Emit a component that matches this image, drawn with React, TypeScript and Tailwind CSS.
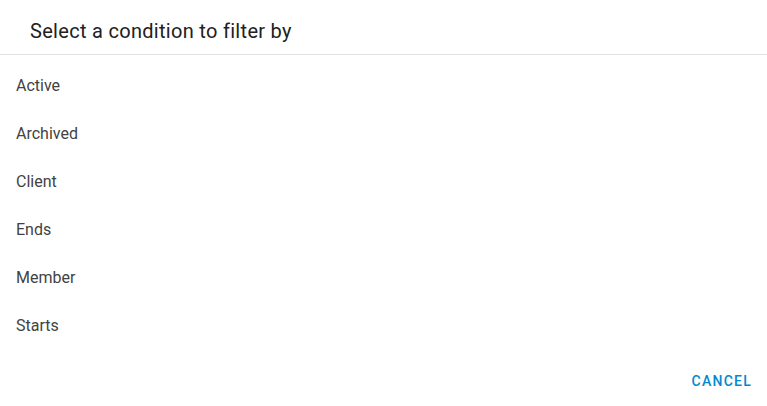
const conditions = ["Active", "Archived", "Client", "Ends", "Member", "Starts"];

export default function App() {
    return (
        <div className="w-[767px] h-[406px] bg-white flex flex-col font-['Roboto',sans-serif]">
            <div className="h-[55px] border-b border-[#e0e0e0] flex items-center px-[30px] pt-[8px]">
                <h2 className="text-[20px] font-normal text-[#212121] tracking-[0.3px]">Select a condition to filter by</h2>
            </div>
            <ul className="pt-[7px]">
                {conditions.map((c) => (
                    <li key={c} className="h-12 flex items-center px-4 text-[16px] text-[#424242]">
                        {c}
                    </li>
                ))}
            </ul>
            <div className="flex justify-end pr-[7px] mt-[13px]">
                <button className="h-9 px-2 text-[14px] font-medium tracking-[1.25px] text-[#0288d1]">CANCEL</button>
            </div>
        </div>
    );
}
